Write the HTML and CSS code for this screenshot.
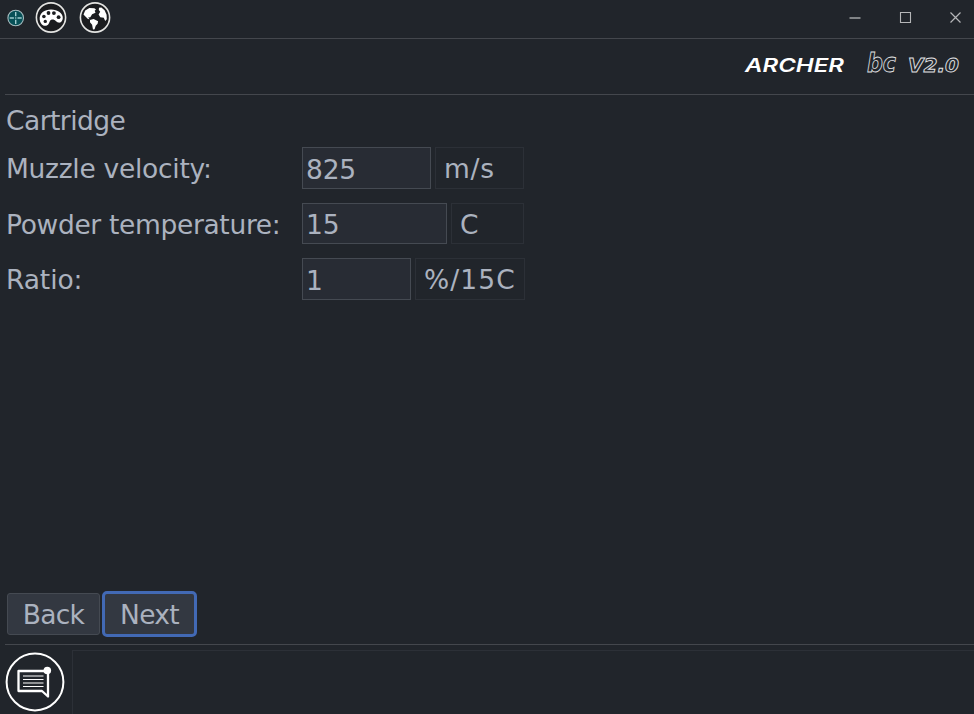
FILE: index.html
```html
<!DOCTYPE html>
<html lang="en">
<head>
<meta charset="utf-8">
<title>Archer BC</title>
<link rel="stylesheet" href="styles.css">
</head>
<body>
<div class="window">
  <header class="titlebar">
    <div class="tools">
      <svg class="app-icon" viewBox="0 0 18 18" width="18" height="18"><circle cx="8.700" cy="9" r="7.800" fill="#075057" stroke="#a5bbbf" stroke-width="1.100"/><path d="M8.700 3v4.200M8.700 10.800v4.200M2.700 9h4.200M10.500 9h4.200" stroke="#a0cccf" stroke-width="1.400"/><circle cx="8.700" cy="9" r=".8" fill="#a0cccf"/></svg>
      <svg class="palette" viewBox="0 0 32 32" width="32" height="32"><circle cx="16" cy="16.500" r="14.600" fill="#1b1c1f" stroke="#e4e4e2" stroke-width="1.600"/><path d="M4.700 18.500C4.200 12 9.500 8.500 16 8.500c6.700 0 12 3.800 11.800 8.600-.1 2.700-1.800 4.900-3.800 4.500-2.800-.6-3.700-3.200-6.500-3.200-2.600 0-2.600 2.200-3.800 4.300-1.200 2-3.200 2.700-5.400 1.700-2.100-1-3.300-3.200-3.600-5.900Z" fill="#fff"/><g fill="#1b1c1f"><circle cx="10.300" cy="20.400" r="1.700"/><circle cx="8.900" cy="15.500" r="1.800"/><circle cx="13.500" cy="12" r="1.900"/><circle cx="18.900" cy="12.100" r="1.900"/><circle cx="23.600" cy="16.200" r="1.900"/></g></svg>
      <svg class="globe" viewBox="0 0 32 32" width="32" height="32"><circle cx="16" cy="16.500" r="14.600" fill="#1b1c1f" stroke="#e4e4e2" stroke-width="1.600"/><path d="M4.500 13.500 6.200 9.500l4.200-2.500 4.900.2 1.700 1.300-1.300 1.300.8 2-3.400 1.400-1.800 3-2.200.4 1.500 1.700-1.600-.2-2.600-2.500ZM11 18.900l3.600-.9 4.500 2.300-.5 2.500-1.900 1.900-1.100 3.600-1.600.3-.9-4.800-2.100-2.600ZM20 6.700l2.400-.3 3.200 2.900 2 4.400.2 4.500-1.600 1.700-1.400-3.200-3.500-.5-1.700-2.800 1.600-2.600-1.400-1.900Z" fill="#fff"/></svg>
    </div>
    <div class="controls">
      <svg viewBox="0 0 14 14" width="14" height="14"><path d="M1.500 8h11" stroke="#b5b6b8" stroke-width="1.300"/></svg>
      <svg viewBox="0 0 14 14" width="14" height="14"><path d="M2.500 2.500h10v10h-10Z" fill="none" stroke="#b5b6b8" stroke-width="1.100"/></svg>
      <svg viewBox="0 0 14 14" width="14" height="14"><path d="m2.500 2.500 10 10M12.500 2.500l-10 10" stroke="#b5b6b8" stroke-width="1.200"/></svg>
    </div>
  </header>
  <div class="brand">
    <svg viewBox="0 0 230 34" width="230" height="34">
      <text class="archer" x="5" y="24.500" textLength="99" lengthAdjust="spacingAndGlyphs">ARCHER</text>
      <text class="outline bc" x="127" y="24.500" textLength="29" lengthAdjust="spacingAndGlyphs">bc</text>
      <text class="outline version" x="168" y="24.500" textLength="51" lengthAdjust="spacingAndGlyphs">V2.0</text>
    </svg>
  </div>
  <main class="content">
    <h1>Cartridge</h1>
    <div class="form">
      <label class="l1" for="velocity">Muzzle velocity:</label><div class="field"><input id="velocity" value="825"><span class="unit u1">m/s</span></div>
      <label class="l2" for="temp">Powder temperature:</label><div class="field"><input id="temp" value="15"><span class="unit u2">C</span></div>
      <label class="l3" for="ratio">Ratio:</label><div class="field last"><input id="ratio" value="1"><span class="unit u3">%/15C</span></div>
    </div>
    <div class="actions"><button>Back</button><button class="next">Next</button></div>
  </main>
  <footer class="status">
    <svg viewBox="0 0 60 60" width="60" height="60"><circle cx="30" cy="30" r="28.400" fill="none" stroke="#fff" stroke-width="2"/><path d="M42 19H13.500v20H37l6 5.500V20" fill="none" stroke="#fff" stroke-width="2.300" stroke-linejoin="round"/><path d="M18 24h20.500M18 27.500h20.500M18 31h20.500M18 34.500h20.500" stroke="#fff" stroke-width="1.200"/><circle cx="42.300" cy="18.500" r="3.800" fill="#fff"/></svg>
    <div class="log"></div>
  </footer>
</div>
</body>
</html>
```

FILE: styles.css
```css
* { box-sizing: border-box; }
body { margin: 0; background: #21252b; color: #abb2bf; font: 26.5px "DejaVu Sans", sans-serif; }
.window { display: flex; flex-direction: column; height: 714px; overflow: hidden; }
.titlebar { display: flex; justify-content: space-between; height: 39px; border-bottom: 1px solid #44474d; }
.tools { display: flex; padding: 1px 0 0 7px; }
.tools svg { flex: none; }
.app-icon { margin-top: 8px; }
.palette { margin-left: 10px; }
.globe { margin-left: 12px; }
.controls { display: flex; gap: 36px; padding: 10px 12px 0 0; }
.brand { display: flex; justify-content: flex-end; height: 56px; margin-left: 5px; padding: 8px 4px 0 0; border-bottom: 1px solid #44474d; }
.archer { font: italic 600 18.5px Inter, sans-serif; fill: #fff; }
.outline { fill: none; stroke: #e0e1e3; stroke-width: .9px; font-family: "DejaVu Sans", sans-serif; font-style: italic; font-weight: bold; }
.bc { font-size: 26px; }
.version { font-size: 19px; }
.content { display: flex; flex-direction: column; flex: 1; padding: 10px 5px 7px; }
h1 { margin: 0; height: 42px; padding-left: 1px; font-size: inherit; font-weight: normal; line-height: 31px; letter-spacing: -.55px; }
.form { display: grid; grid-template-columns: 297px 222px; row-gap: 14px; }
label { padding-left: 1px; line-height: 42.4px; padding-top: 1px; height: 41.6px; white-space: nowrap; }
.l1 { letter-spacing: -.28px; }
.l2 { letter-spacing: -.34px; }
.l3 { letter-spacing: -.1px; }
.field { display: flex; gap: 4px; height: 41.6px; }
.last { width: 223px; }
input { flex: 1; min-width: 0; padding: 3px 3px 0; border: 1px solid #454a52; border-radius: 0; outline: 0; background: #282c34; color: inherit; font: inherit; letter-spacing: -.2px; }
.unit { border: 1px solid #2c3037; padding-left: 8px; line-height: 42.6px; white-space: nowrap; }
.u1 { width: 89px; letter-spacing: .8px; }
.u2 { width: 73px; }
.u3 { width: 110px; letter-spacing: 1.1px; }
.actions { display: flex; gap: 2px; margin-top: auto; align-items: center; padding-left: 2px; }
button { width: 93px; height: 42px; padding: 2px 0 0; border: 1px solid #454a52; border-radius: 3px; background: #333841; color: inherit; font: inherit; line-height: 38px; letter-spacing: -.7px; }
.next { width: 95px; height: 46px; border: 3px solid #4269b4; border-radius: 5px; }
.status { display: flex; height: 70px; margin-left: 5px; border-top: 1px solid #44474d; }
.status svg { flex: none; margin-top: 7px; }
.log { flex: 1; margin: 5px 0 0 7px; border: solid #2c3037; border-width: 1px 0 0 1px; }
```
